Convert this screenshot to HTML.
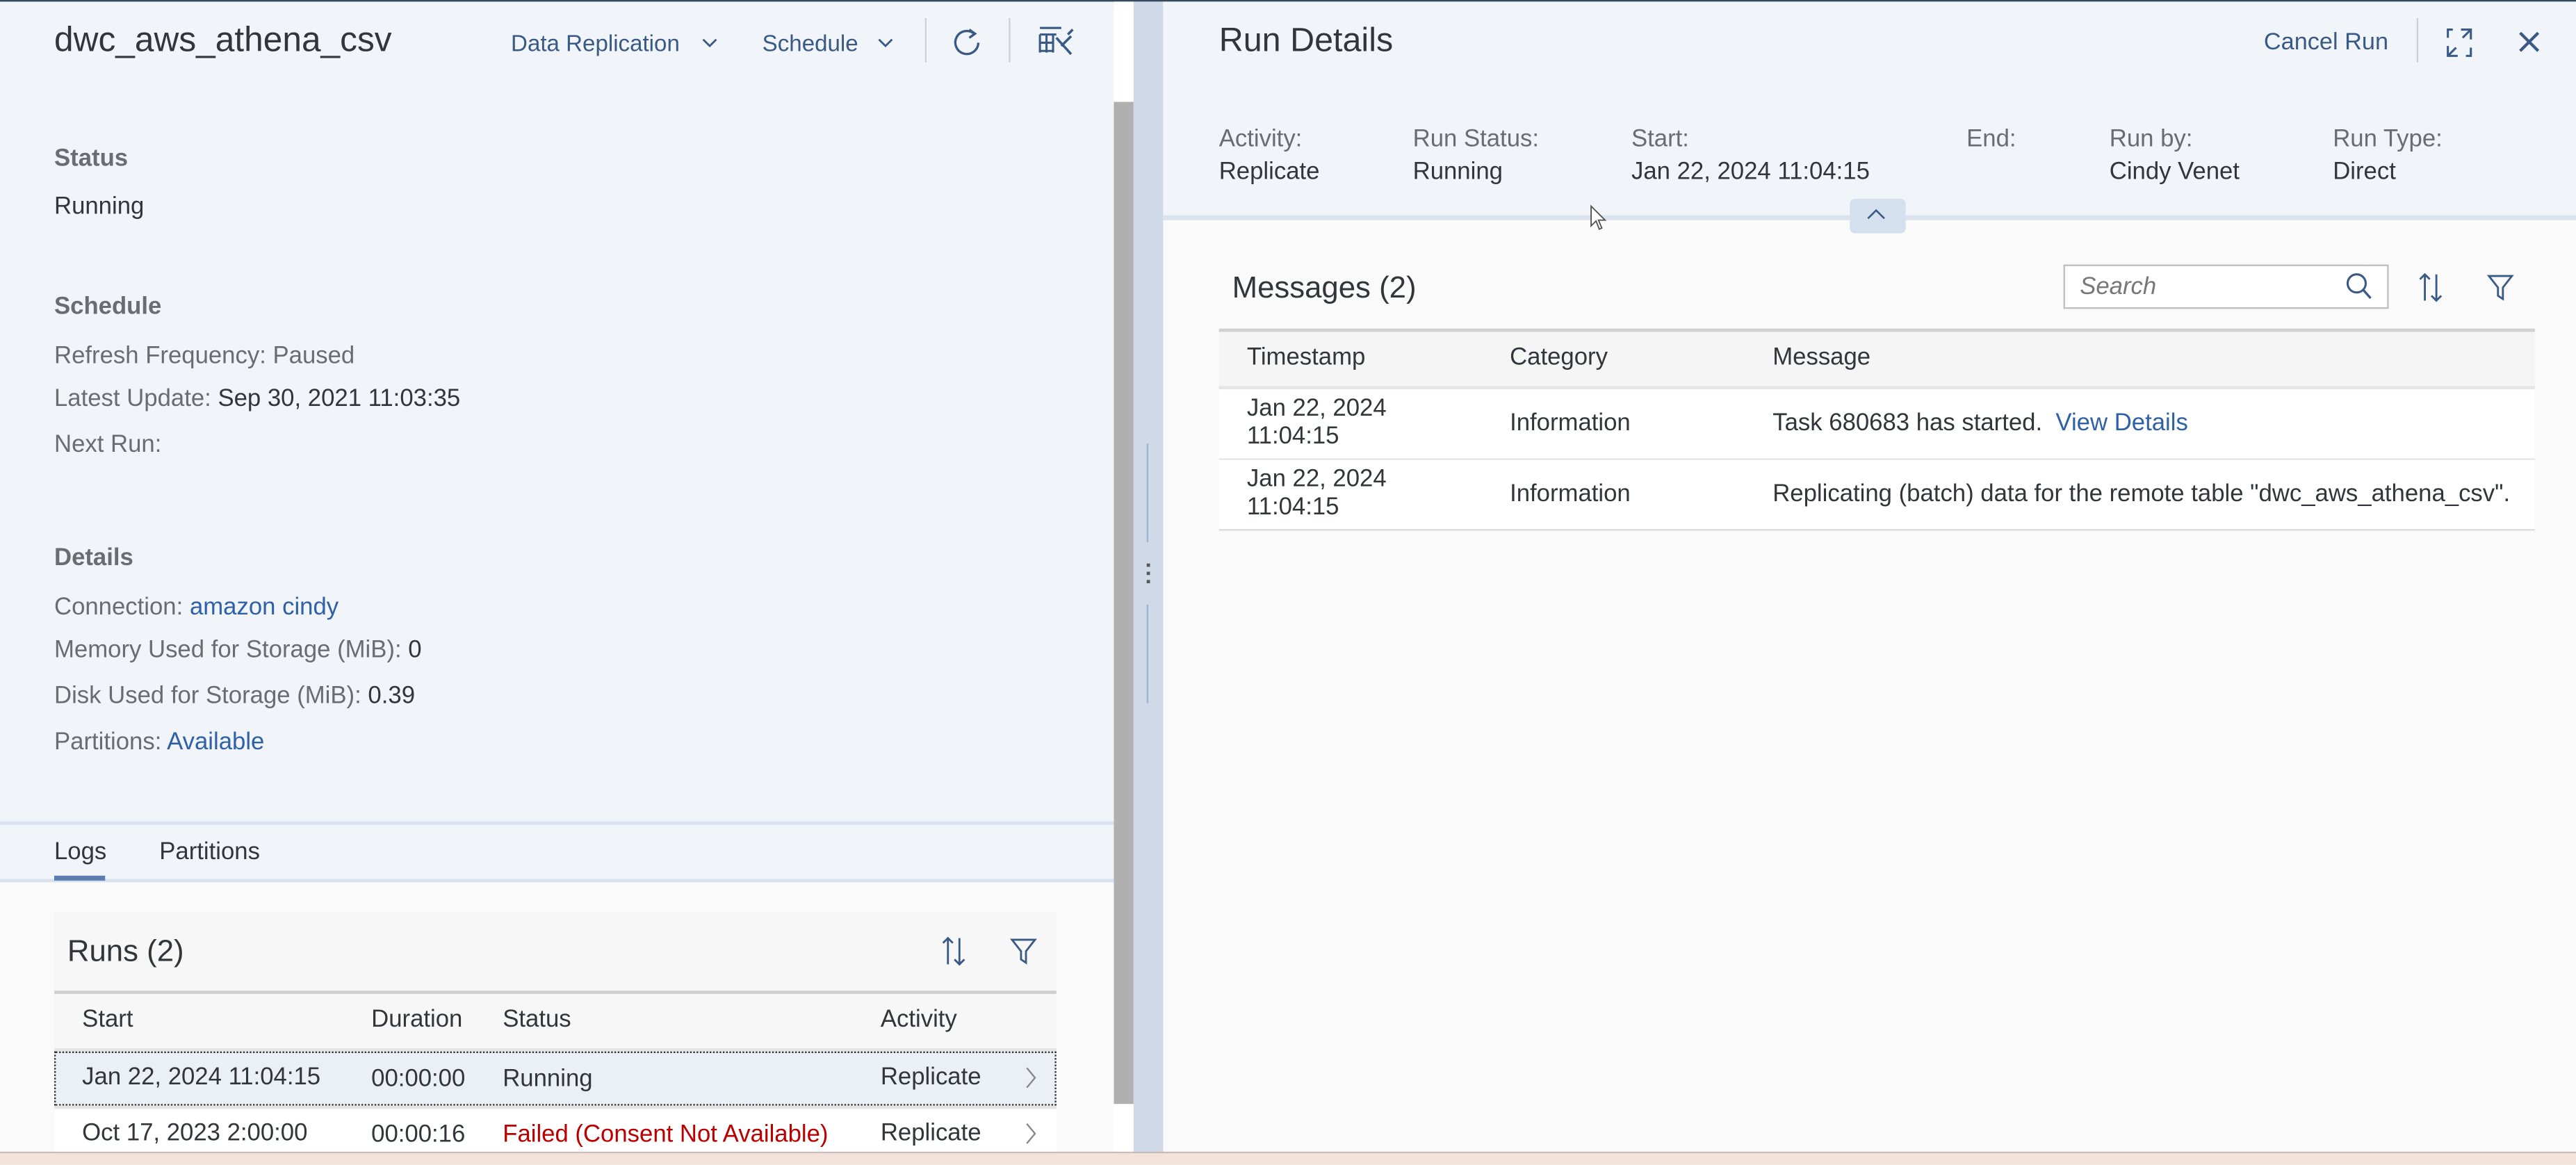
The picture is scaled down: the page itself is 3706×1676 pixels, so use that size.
<!DOCTYPE html>
<html><head><meta charset="utf-8"><style>
*{margin:0;padding:0;box-sizing:border-box}
html,body{width:3706px;height:1676px;overflow:hidden;background:#fafafa}
#w{position:absolute;left:0;top:0;width:1568px;height:709px;transform:scale(2.36352);transform-origin:0 0;font-family:"Liberation Sans",sans-serif;font-size:14.7px;color:#32363a;background:#fafafa}
.a{position:absolute;white-space:nowrap}
.lbl{color:#6a6d70}
.b{font-weight:bold;color:#6a6d70}
.lnk{color:#2f61a8}
.btn{color:#3a5a86}
svg{position:absolute;overflow:visible}
.m{transform:translateY(-50%)}
</style></head><body><div id="w">
<div class="a" style="left:0;top:0;width:678px;height:537px;background:#f1f4f9"></div>
<div class="a" style="left:0;top:0;width:1568px;height:1px;background:#354a5f"></div>
<div class="a" style="left:0;top:500px;width:678px;height:2px;background:#d9e2ee"></div>
<div class="a" style="left:0;top:535px;width:678px;height:2px;background:#d9e2ee"></div>
<div class="a" style="left:33px;top:533px;width:31px;height:3px;background:#5b7eaf"></div>
<div class="a" style="left:678px;top:1px;width:12px;height:61px;background:#fff"></div>
<div class="a" style="left:678px;top:62px;width:12px;height:610px;background:#b0b0b0"></div>
<div class="a" style="left:678px;top:672px;width:12px;height:30px;background:#fff"></div>
<div class="a" style="left:690px;top:1px;width:18px;height:701px;background:#cfd9e8"></div>
<div class="a" style="left:698px;top:270px;width:1px;height:60px;background:#9fb3cf"></div>
<div class="a" style="left:698px;top:368px;width:1px;height:60px;background:#9fb3cf"></div>
<div class="a" style="left:698px;top:343px;width:2px;height:2px;background:#555;box-shadow:0 5px 0 #555,0 10px 0 #555"></div>

<div class="a m" style="left:33px;top:25px;font-size:21px;color:#32363a">dwc_aws_athena_csv</div>
<div class="a m btn" style="left:311px;top:26px;font-size:14px">Data Replication</div>
<svg style="left:427px;top:22px" width="10" height="8"><path d="M1 2 L5 6 L9 2" fill="none" stroke="#3a5a86" stroke-width="1.2"/></svg>
<div class="a m btn" style="left:464px;top:26px;font-size:14px">Schedule</div>
<svg style="left:534px;top:22px" width="10" height="8"><path d="M1 2 L5 6 L9 2" fill="none" stroke="#3a5a86" stroke-width="1.2"/></svg>
<div class="a" style="left:563px;top:11px;width:1px;height:27px;background:#cdd2d8"></div>
<svg style="left:580px;top:17px" width="18" height="18"><path d="M13 3.5 A7 7 0 1 0 15.5 9" fill="none" stroke="#3a5a86" stroke-width="1.4"/><path d="M10 1 L13.5 3.5 L10 6" fill="none" stroke="#3a5a86" stroke-width="1.4"/></svg>
<div class="a" style="left:614px;top:11px;width:1px;height:27px;background:#cdd2d8"></div>
<svg style="left:632px;top:16px" width="24" height="20"><path d="M1 1h13M1 5h10M1 10h8M1 15h8M1 5v11M5 5v11M9 5v11" fill="none" stroke="#3a5a86" stroke-width="1.3"/><path d="M11 7 L20 17 M14 12 L20 6 M18 5 L21 2" fill="none" stroke="#3a5a86" stroke-width="1.5"/></svg>

<div class="a m b" style="left:33px;top:97px">Status</div>
<div class="a m" style="left:33px;top:126px">Running</div>
<div class="a m b" style="left:33px;top:187px">Schedule</div>
<div class="a m lbl" style="left:33px;top:217px">Refresh Frequency: Paused</div>
<div class="a m" style="left:33px;top:243px"><span class="lbl">Latest Update:</span> Sep 30, 2021 11:03:35</div>
<div class="a m lbl" style="left:33px;top:271px">Next Run:</div>
<div class="a m b" style="left:33px;top:340px">Details</div>
<div class="a m" style="left:33px;top:370px"><span class="lbl">Connection:</span> <span class="lnk">amazon cindy</span></div>
<div class="a m" style="left:33px;top:396px"><span class="lbl">Memory Used for Storage (MiB):</span> 0</div>
<div class="a m" style="left:33px;top:424px"><span class="lbl">Disk Used for Storage (MiB):</span> 0.39</div>
<div class="a m" style="left:33px;top:452px"><span class="lbl">Partitions:</span> <span class="lnk">Available</span></div>
<div class="a m" style="left:33px;top:519px">Logs</div>
<div class="a m" style="left:97px;top:519px">Partitions</div>

<div class="a" style="left:33px;top:555px;width:610px;height:146px;background:#f7f7f7"></div>
<div class="a m" style="left:41px;top:579px;font-size:18.5px">Runs (2)</div>
<svg style="left:572px;top:570px" width="18" height="18"><path d="M5 1v16M2 4l3-3 3 3M12 1v16M9 14l3 3 3-3" fill="none" stroke="#3a5a86" stroke-width="1.2"/></svg>
<svg style="left:615px;top:571px" width="16" height="16"><path d="M1 1h14l-5.5 7v7l-3-2V8z" fill="none" stroke="#3a5a86" stroke-width="1.2"/></svg>
<div class="a" style="left:33px;top:603px;width:610px;height:2px;background:#cfcfcf"></div>
<div class="a m" style="left:50px;top:621px">Start</div>
<div class="a m" style="left:226px;top:621px">Duration</div>
<div class="a m" style="left:306px;top:621px">Status</div>
<div class="a m" style="left:536px;top:621px">Activity</div>
<div class="a" style="left:33px;top:638px;width:610px;height:2px;background:#e5e5e5"></div>
<div class="a" style="left:33px;top:640px;width:610px;height:33px;background:#ebf0f7;border:1px dotted #333"></div>
<div class="a m" style="left:50px;top:656px">Jan 22, 2024 11:04:15</div>
<div class="a m" style="left:226px;top:657px">00:00:00</div>
<div class="a m" style="left:306px;top:657px">Running</div>
<div class="a m" style="left:536px;top:656px">Replicate</div>
<svg style="left:624px;top:649px" width="8" height="14"><path d="M1 1l5 6-5 6" fill="none" stroke="#888" stroke-width="1"/></svg>
<div class="a" style="left:33px;top:673px;width:610px;height:2px;background:#e5e5e5"></div>
<div class="a" style="left:33px;top:675px;width:610px;height:27px;background:#fff"></div>
<div class="a m" style="left:50px;top:690px">Oct 17, 2023 2:00:00</div>
<div class="a m" style="left:226px;top:691px">00:00:16</div>
<div class="a m" style="left:306px;top:691px;color:#b00">Failed (Consent Not Available)</div>
<div class="a m" style="left:536px;top:690px">Replicate</div>
<svg style="left:624px;top:683px" width="8" height="14"><path d="M1 1l5 6-5 6" fill="none" stroke="#888" stroke-width="1"/></svg>

<div class="a" style="left:708px;top:1px;width:860px;height:130px;background:#f1f4f9"></div>
<div class="a" style="left:708px;top:131px;width:860px;height:3px;background:#d9e2ee"></div>
<div class="a" style="left:1126px;top:121px;width:34px;height:21px;background:#d5e0ee;border-radius:3px"></div>
<svg style="left:1136px;top:127px" width="12" height="8"><path d="M1 6l5-5 5 5" fill="none" stroke="#3a5a86" stroke-width="1.1"/></svg>
<div class="a m" style="left:742px;top:25px;font-size:20.5px">Run Details</div>
<div class="a m btn" style="left:1378px;top:26px;font-size:14.5px">Cancel Run</div>
<div class="a" style="left:1471px;top:11px;width:1px;height:27px;background:#cdd2d8"></div>
<svg style="left:1489px;top:17px" width="16" height="18"><path d="M9 1h6v6M15 1l-5 5M7 17H1v-6M1 17l5-5M1 6V1h3M15 12v5h-3" fill="none" stroke="#3a5a86" stroke-width="1.3"/></svg>
<svg style="left:1533px;top:19px" width="13" height="13"><path d="M1 1l11 11M12 1L1 12" fill="none" stroke="#3a5a86" stroke-width="1.8"/></svg>
<div class="a m lbl" style="left:742px;top:85px">Activity:</div>
<div class="a m" style="left:742px;top:105px">Replicate</div>
<div class="a m lbl" style="left:860px;top:85px">Run Status:</div>
<div class="a m" style="left:860px;top:105px">Running</div>
<div class="a m lbl" style="left:993px;top:85px">Start:</div>
<div class="a m" style="left:993px;top:105px">Jan 22, 2024 11:04:15</div>
<div class="a m lbl" style="left:1197px;top:85px">End:</div>
<div class="a m lbl" style="left:1284px;top:85px">Run by:</div>
<div class="a m" style="left:1284px;top:105px">Cindy Venet</div>
<div class="a m lbl" style="left:1420px;top:85px">Run Type:</div>
<div class="a m" style="left:1420px;top:105px">Direct</div>
<svg style="left:968px;top:125px" width="10" height="16"><path d="M0.5 0.5v12l3-3 2 5 1.5-.7-2-4.8h4z" fill="#fff" stroke="#555" stroke-width=".8"/></svg>

<div class="a m" style="left:750px;top:175px;font-size:18.5px">Messages (2)</div>
<div class="a" style="left:1256px;top:161px;width:198px;height:27px;background:#fff;border:1px solid #bfbfbf"></div>
<div class="a m" style="left:1266px;top:175px;font-style:italic;color:#777">Search</div>
<svg style="left:1428px;top:166px" width="16" height="17"><circle cx="6.5" cy="6.5" r="5.5" fill="none" stroke="#3a5a86" stroke-width="1.3"/><path d="M10.5 10.5l4.5 5" stroke="#3a5a86" stroke-width="1.4"/></svg>
<svg style="left:1471px;top:166px" width="18" height="18"><path d="M5 1v16M2 4l3-3 3 3M12 1v16M9 14l3 3 3-3" fill="none" stroke="#3a5a86" stroke-width="1.2"/></svg>
<svg style="left:1514px;top:167px" width="16" height="16"><path d="M1 1h14l-5.5 7v7l-3-2V8z" fill="none" stroke="#3a5a86" stroke-width="1.2"/></svg>
<div class="a" style="left:742px;top:200px;width:801px;height:36px;background:#f5f5f5;border-top:2px solid #d0d0d0"></div>
<div class="a m" style="left:759px;top:218px">Timestamp</div>
<div class="a m" style="left:919px;top:218px">Category</div>
<div class="a m" style="left:1079px;top:218px">Message</div>
<div class="a" style="left:742px;top:235px;width:801px;height:2px;background:#e5e5e5"></div>
<div class="a" style="left:742px;top:237px;width:801px;height:42px;background:#fff"></div>
<div class="a" style="left:742px;top:279px;width:801px;height:1px;background:#e5e5e5"></div>
<div class="a" style="left:742px;top:280px;width:801px;height:42px;background:#fff"></div>
<div class="a" style="left:742px;top:322px;width:801px;height:1px;background:#dcdcdc"></div>
<div class="a" style="left:759px;top:241px;line-height:17px">Jan 22, 2024<br>11:04:15</div>
<div class="a m" style="left:919px;top:258px">Information</div>
<div class="a m" style="left:1079px;top:258px">Task 680683 has started. &nbsp;<span class="lnk">View Details</span></div>
<div class="a" style="left:759px;top:284px;line-height:17px">Jan 22, 2024<br>11:04:15</div>
<div class="a m" style="left:919px;top:301px">Information</div>
<div class="a m" style="left:1079px;top:301px">Replicating (batch) data for the remote table "dwc_aws_athena_csv".</div>

<div class="a" style="left:0;top:701px;width:1568px;height:1px;background:#c8bcb6"></div>
<div class="a" style="left:0;top:702px;width:1568px;height:7px;background:#f3e3da"></div>
</div></body></html>
